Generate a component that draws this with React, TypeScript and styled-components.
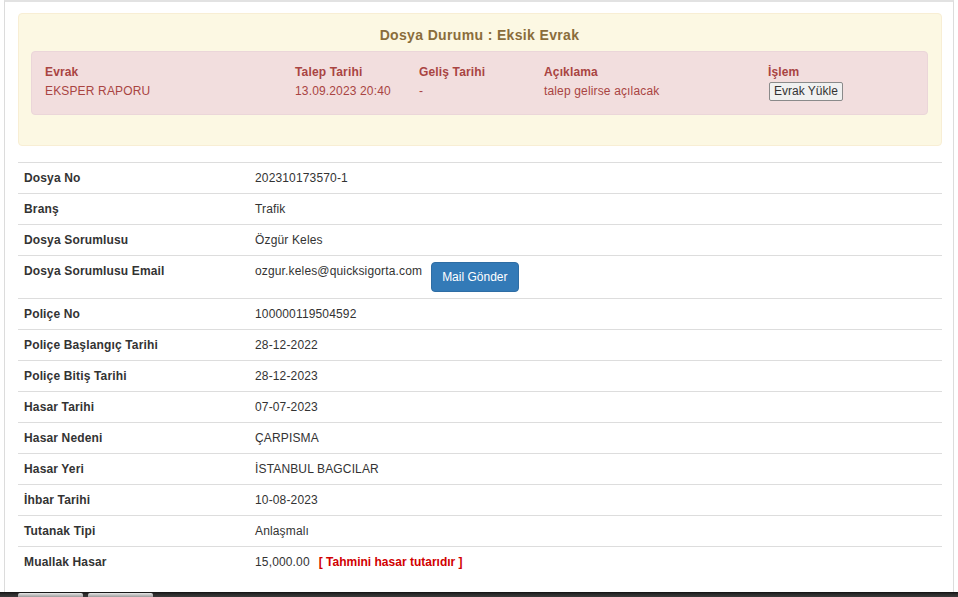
import React from 'react'
import styled, { createGlobalStyle } from 'styled-components'

interface DetailRow {
    label: string
    value: string
}

const DETAILS_TOP: DetailRow[] = [
    { label: 'Dosya No', value: '202310173570-1' },
    { label: 'Branş', value: 'Trafik' },
    { label: 'Dosya Sorumlusu', value: 'Özgür Keles' },
]

const DETAILS_BOTTOM: DetailRow[] = [
    { label: 'Poliçe No', value: '100000119504592' },
    { label: 'Poliçe Başlangıç Tarihi', value: '28-12-2022' },
    { label: 'Poliçe Bitiş Tarihi', value: '28-12-2023' },
    { label: 'Hasar Tarihi', value: '07-07-2023' },
    { label: 'Hasar Nedeni', value: 'ÇARPISMA' },
    { label: 'Hasar Yeri', value: 'İSTANBUL BAGCILAR' },
    { label: 'İhbar Tarihi', value: '10-08-2023' },
    { label: 'Tutanak Tipi', value: 'Anlaşmalı' },
]

const GlobalStyle = createGlobalStyle`
    html, body {
        margin: 0;
        padding: 0;
        background: #fff;
        font-family: "Liberation Sans", Arial, sans-serif;
        font-size: 12px;
        letter-spacing: 0.15px;
        color: #333;
    }
`

const App = () => {
    return (
        <>
            <GlobalStyle />
            <Page>
                <Frame>
                    <StatusBox>
                        <StatusTitle>Dosya Durumu : Eksik Evrak</StatusTitle>
                        <MissingBox>
                            <MissingGrid>
                                <MissingHead>Evrak</MissingHead>
                                <MissingHead>Talep Tarihi</MissingHead>
                                <MissingHead>Geliş Tarihi</MissingHead>
                                <MissingHead>Açıklama</MissingHead>
                                <MissingHead>İşlem</MissingHead>
                                <MissingCell>EKSPER RAPORU</MissingCell>
                                <MissingCell>13.09.2023 20:40</MissingCell>
                                <MissingCell>-</MissingCell>
                                <MissingCell>talep gelirse açılacak</MissingCell>
                                <MissingCell>
                                    <UploadButton type="button">Evrak Yükle</UploadButton>
                                </MissingCell>
                            </MissingGrid>
                        </MissingBox>
                    </StatusBox>

                    <DetailTable>
                        <tbody>
                            {DETAILS_TOP.map(({ label, value }) => (
                                <Row key={label}>
                                    <LabelCell>{label}</LabelCell>
                                    <ValueCell>{value}</ValueCell>
                                </Row>
                            ))}
                            <Row>
                                <LabelCell>Dosya Sorumlusu Email</LabelCell>
                                <ValueCell>
                                    ozgur.keles@quicksigorta.com
                                    <MailButton type="button">Mail Gönder</MailButton>
                                </ValueCell>
                            </Row>
                            {DETAILS_BOTTOM.map(({ label, value }) => (
                                <Row key={label}>
                                    <LabelCell>{label}</LabelCell>
                                    <ValueCell>{value}</ValueCell>
                                </Row>
                            ))}
                            <Row>
                                <LabelCell>Muallak Hasar</LabelCell>
                                <ValueCell>
                                    15,000.00
                                    <EstimateNote>[ Tahmini hasar tutarıdır ]</EstimateNote>
                                </ValueCell>
                            </Row>
                        </tbody>
                    </DetailTable>
                </Frame>
                <Taskbar>
                    <TaskTab />
                    <TaskTab />
                </Taskbar>
            </Page>
        </>
    )
}

export default App

const Page = styled.div`
    height: 597px;
    display: flex;
    flex-direction: column;
    overflow: hidden;
`

const Frame = styled.div`
    flex: 1;
    width: 950px;
    margin-left: 4px;
    padding: 11px 11px 0 13px;
    box-sizing: border-box;
    border-top: 2px solid #e2e2e2;
    border-left: 1px solid #dcdcdc;
    border-right: 1px solid #dcdcdc;
`

const StatusBox = styled.div`
    background: #fcf8e3;
    border: 1px solid #f8eed4;
    border-radius: 4px;
    padding: 13px 13px 30px 12px;
    margin-bottom: 16px;
`

const StatusTitle = styled.div`
    text-align: center;
    font-size: 14px;
    font-weight: bold;
    line-height: 16px;
    letter-spacing: 0.35px;
    color: #8a6d3b;
    margin-bottom: 8px;
`

const MissingBox = styled.div`
    background: #f2dede;
    border: 1px solid #ebd6d9;
    border-radius: 4px;
    padding: 12px 13px 13px 13px;
`

const MissingGrid = styled.div`
    display: grid;
    grid-template-columns: 250px 124px 125px 224px 1fr;
    color: #a94442;
`

const MissingHead = styled.div`
    font-weight: bold;
    line-height: 17px;
`

const MissingCell = styled.div`
    line-height: 20px;
    display: flex;
    align-items: center;
`

const UploadButton = styled.button`
    height: 19px;
    padding: 0 4px;
    margin: 1px 0 0 1px;
    font-family: "Liberation Sans", Arial, sans-serif;
    font-size: 12px;
    letter-spacing: 0;
    color: #333;
    background: #f0f0f0;
    border: 1px solid #8a8a8a;
    border-radius: 2px;
    line-height: 17px;
`

const DetailTable = styled.table`
    width: 100%;
    border-collapse: collapse;
    border-spacing: 0;
`

const Row = styled.tr`
    border-top: 1px solid #dddddd;
`

const LabelCell = styled.td`
    width: 25%;
    padding: 6px 6px;
    line-height: 18px;
    font-weight: bold;
    color: #333;
    vertical-align: top;
`

const ValueCell = styled.td`
    padding: 6px 6px;
    line-height: 18px;
    color: #333;
    vertical-align: top;
`

const MailButton = styled.button`
    vertical-align: top;
    height: 30px;
    margin-left: 9px;
    padding: 0 10px;
    font-family: "Liberation Sans", Arial, sans-serif;
    font-size: 12px;
    letter-spacing: 0;
    color: #fff;
    background: #337ab7;
    border: 1px solid #2e6da4;
    border-radius: 4px;
`

const EstimateNote = styled.span`
    margin-left: 9px;
    font-weight: bold;
    letter-spacing: 0;
    color: #d10000;
`

const Taskbar = styled.div`
    height: 5px;
    display: flex;
    gap: 5px;
    padding: 1px 0 0 18px;
    box-sizing: border-box;
    background: linear-gradient(#111 0, #2a2a2a 2px, #3a3a3a 100%);
`

const TaskTab = styled.div`
    width: 65px;
    height: 4px;
    border-radius: 2px 2px 0 0;
    background: linear-gradient(#e8e8e8, #9a9a9a);
`
